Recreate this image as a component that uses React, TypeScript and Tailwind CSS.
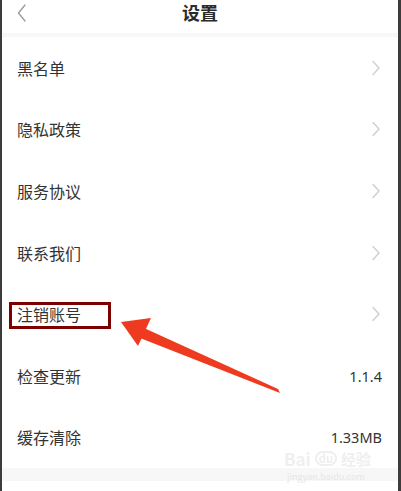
import React from "react";

type Row = { label: string; value?: string };

const ROWS: Row[] = [
  { label: "黑名单" },
  { label: "隐私政策" },
  { label: "服务协议" },
  { label: "联系我们" },
  { label: "注销账号" },
  { label: "检查更新", value: "1.1.4" },
  { label: "缓存清除", value: "1.33MB" },
];

function Chevron() {
  return (
    <svg width="10" height="16" viewBox="0 0 10 16" fill="none" className="mr-[1px]">
      <path d="M2 1.5l6 6.5-6 6.5" stroke="#cfcfcf" strokeWidth="1.4" strokeLinecap="round" strokeLinejoin="round" />
    </svg>
  );
}

export default function App() {
  return (
    <div
      className="relative w-[401px] h-[491px] overflow-hidden bg-white border-l-2 border-r-[3px] border-[#3c3c3c] text-[#333]"
      style={{ fontFamily: '"Noto Sans CJK SC", "Noto Sans", sans-serif' }}
    >
      {/* header */}
      <div className="relative flex h-[33px] items-start justify-center pt-[3px]">
        <svg width="10" height="18" viewBox="0 0 10 18" fill="none" className="absolute left-[15px] top-[4px]">
          <path d="M8 1L1.5 9 8 17" stroke="#9a9a9a" strokeWidth="1.3" strokeLinecap="round" strokeLinejoin="round" />
        </svg>
        <span className="text-[18px] font-bold leading-none text-[#2a2a2a]">设置</span>
      </div>
      <div className="h-[4px] bg-[#f8f8f8]" />

      <div className="flex flex-col">
        {ROWS.map((r) => (
          <div key={r.label} className="flex h-[61.6px] items-center justify-between pl-[15px] pr-[16px]">
            <span className="text-[16px] leading-none text-[#333]">{r.label}</span>
            {r.value ? (
              <span className="text-[14.5px] leading-none text-[#333]" style={{ fontFamily: '"Noto Sans", sans-serif' }}>
                {r.value}
              </span>
            ) : (
              <Chevron />
            )}
          </div>
        ))}
      </div>
      <div className="h-[13px] bg-[#f7f7f7]" />

      {/* watermark */}
      <div className="absolute left-[282px] top-[450px] flex items-center gap-1 text-[17px] font-bold leading-none text-[#efefef]">
        <span>Bai</span>
        <span className="rounded-full border-2 border-[#efefef] px-[2px] text-[11px]">du</span>
        <span className="text-[15px]">经验</span>
      </div>
      <div className="absolute left-[285px] top-[472px] text-[9px] leading-none text-[#e6e6e6]">jingyan.baidu.com</div>

      {/* annotation */}
      <div className="absolute left-[7px] top-[302px] h-[27px] w-[102px] border-[3px] border-[#7d0000]" />
      <svg className="absolute left-0 top-0" width="401" height="491" viewBox="0 0 401 491">
        <polygon points="278,393 276,389 142,328 138,338" fill="#ee3a1e" />
        <polygon points="119,322 149,318 136,346" fill="#ee3a1e" />
      </svg>
    </div>
  );
}
